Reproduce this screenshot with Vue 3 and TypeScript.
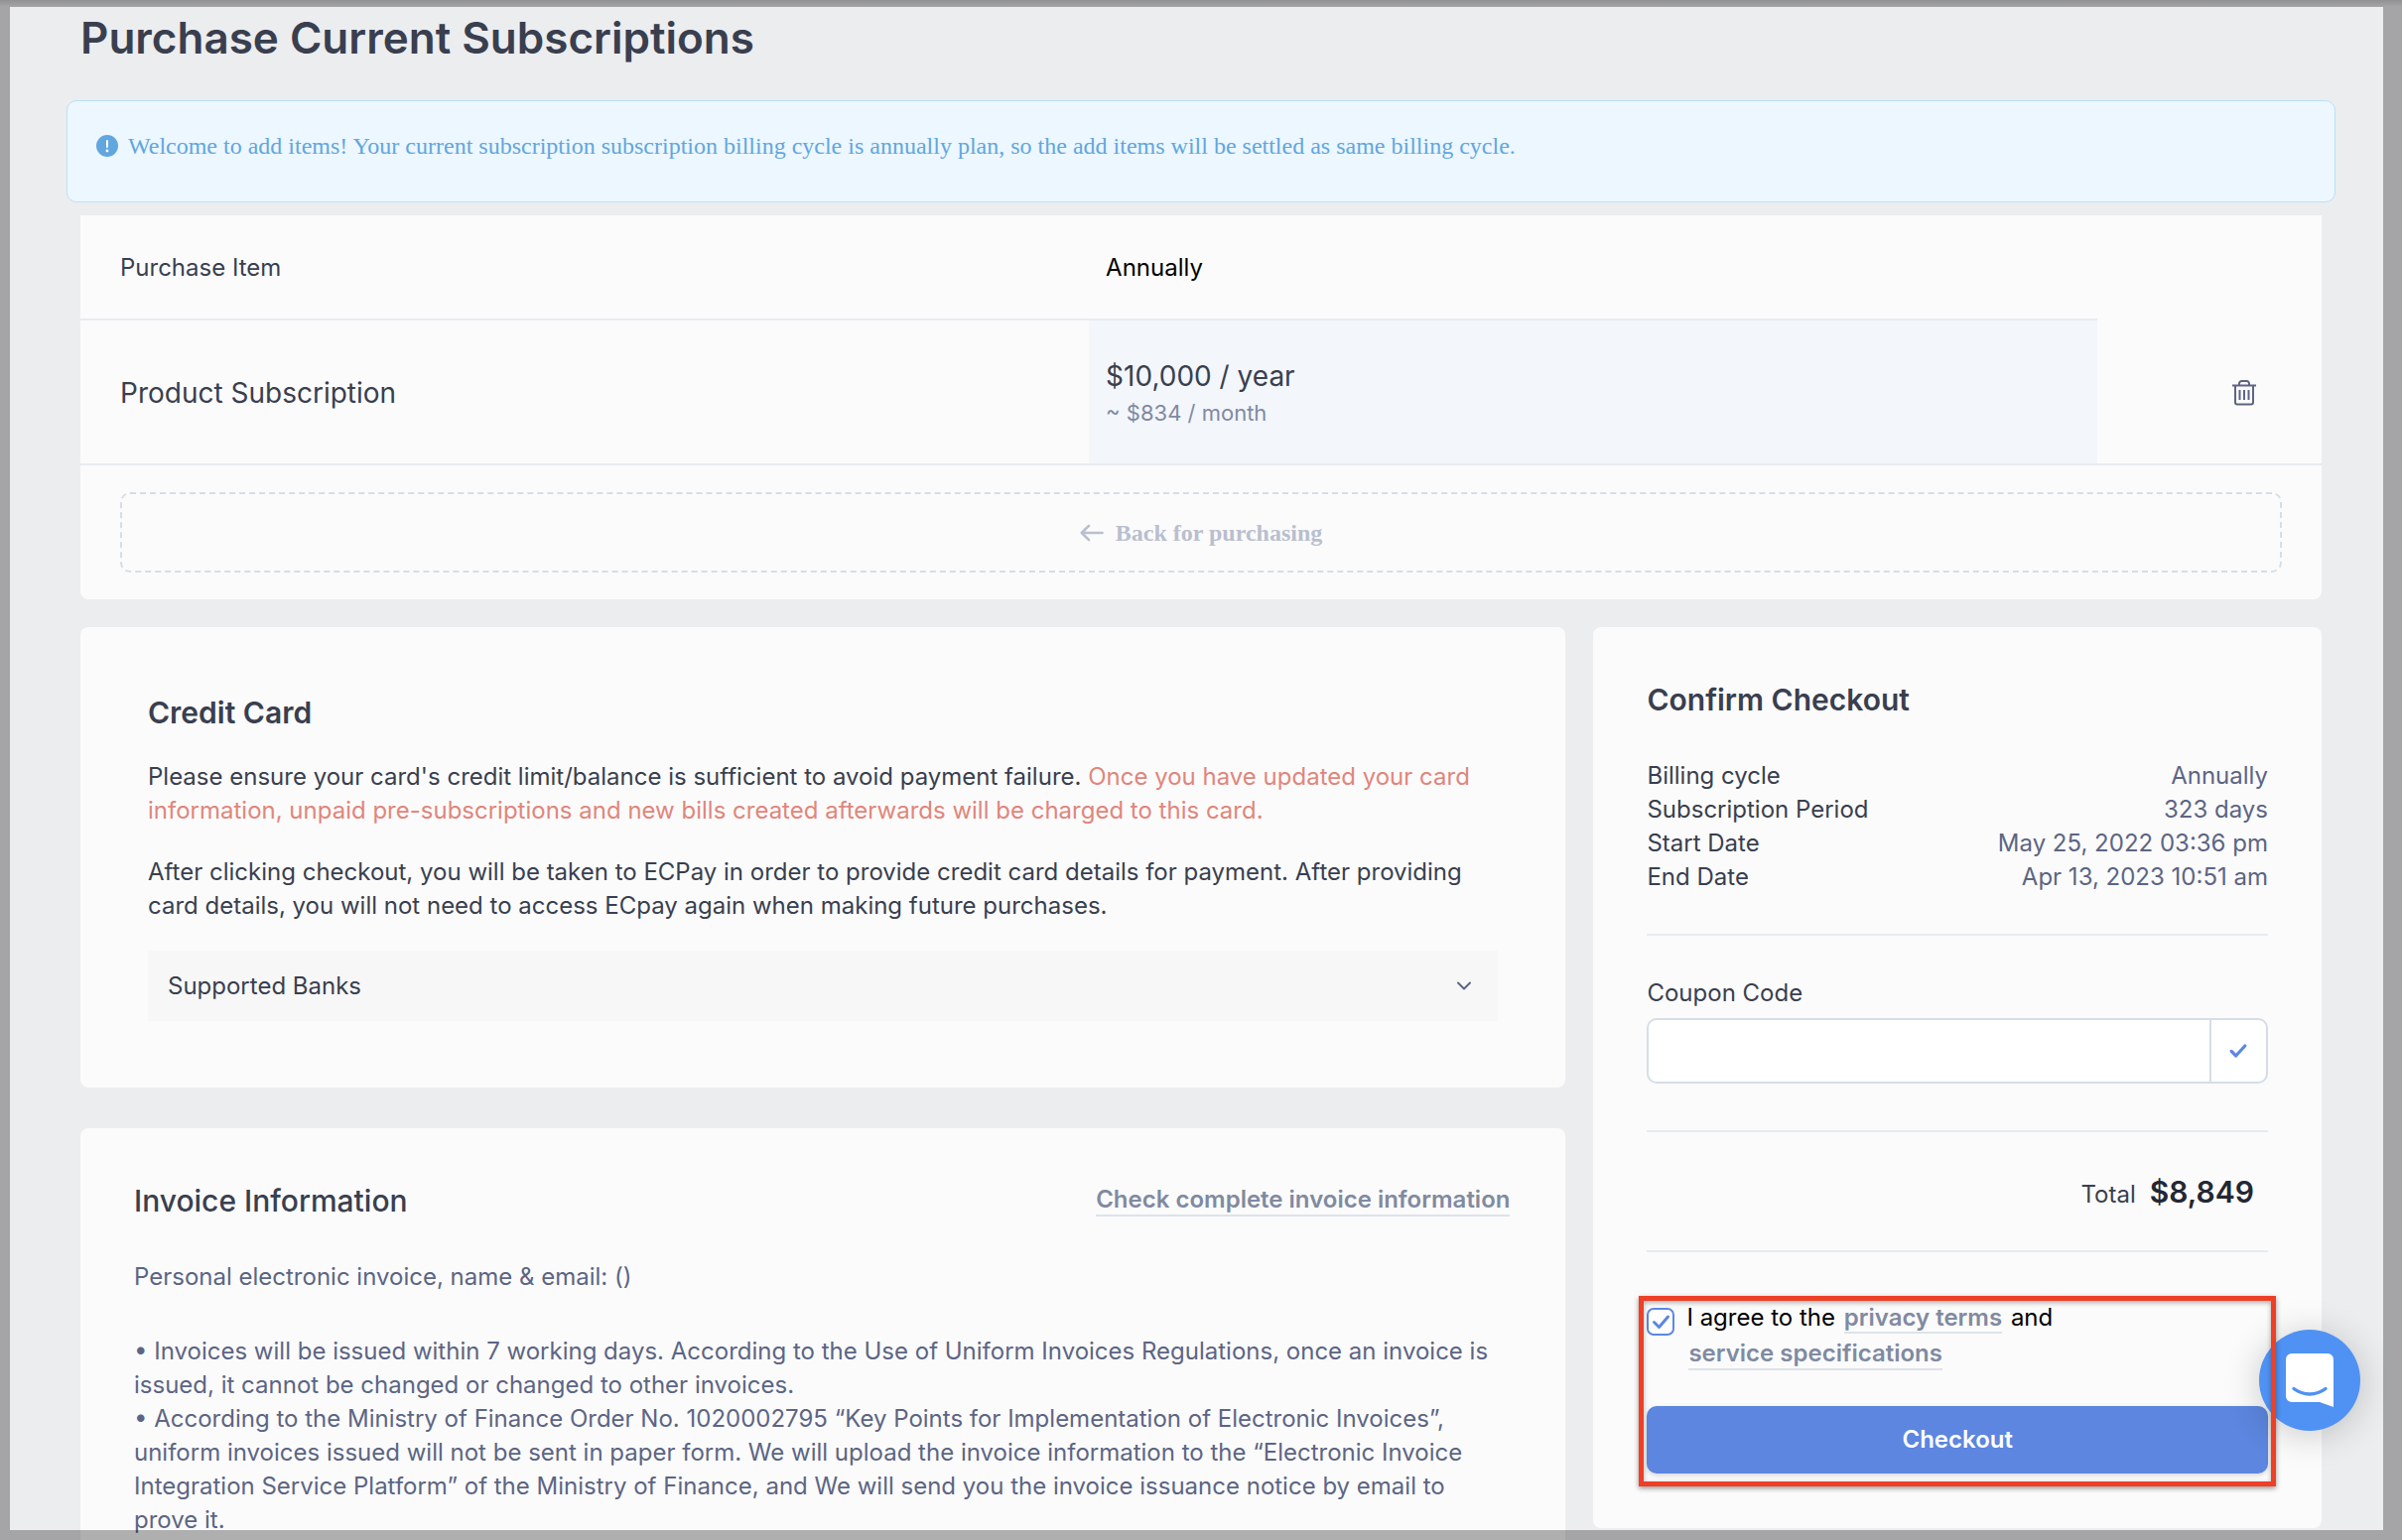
<script setup lang="ts">
import { ref } from 'vue'

interface SummaryRow {
  label: string
  value: string
}

const summary: SummaryRow[] = [
  { label: 'Billing cycle', value: 'Annually' },
  { label: 'Subscription Period', value: '323 days' },
  { label: 'Start Date', value: 'May 25, 2022 03:36 pm' },
  { label: 'End Date', value: 'Apr 13, 2023 10:51 am' },
]

const notes: string[] = [
  '• Invoices will be issued within 7 working days. According to the Use of Uniform Invoices Regulations, once an invoice is issued, it cannot be changed or changed to other invoices.',
  '• According to the Ministry of Finance Order No. 1020002795 “Key Points for Implementation of Electronic Invoices”, uniform invoices issued will not be sent in paper form. We will upload the invoice information to the “Electronic Invoice Integration Service Platform” of the Ministry of Finance, and We will send you the invoice issuance notice by email to prove it.',
]

const coupon = ref('')
const agreed = ref(true)
const banksOpen = ref(false)
</script>

<template>
  <div class="page">
    <main class="content">
      <h1 class="title">Purchase Current Subscriptions</h1>

      <div class="notice" role="status">
        <svg class="notice-icon" viewBox="0 0 22 22" aria-hidden="true">
          <circle cx="11" cy="11" r="11" fill="#62a6de" />
          <rect x="10" y="5" width="2" height="8" rx="1" fill="#fff" />
          <circle cx="11" cy="16" r="1.4" fill="#fff" />
        </svg>
        <span>Welcome to add items! Your current subscription subscription billing cycle is annually plan, so the add items will be settled as same billing cycle.</span>
      </div>

      <section class="card items">
        <table class="items-table">
          <thead>
            <tr>
              <th class="name" scope="col">Purchase Item</th>
              <th class="cycle" scope="col">Annually</th>
              <td class="actions"></td>
            </tr>
          </thead>
          <tbody>
            <tr>
              <td class="name product">Product Subscription</td>
              <td class="cycle price-cell">
                <div class="price">$10,000 / year</div>
                <div class="per-month">~ $834 / month</div>
              </td>
              <td class="actions">
                <button class="icon-button" type="button" aria-label="Remove item">
                  <svg width="24" height="26" viewBox="0 0 24 26" fill="none" stroke="#5c6584" stroke-width="2" aria-hidden="true">
                    <path d="M0 5.500h24M3 6v16.500a2 2 0 0 0 2 2h14a2 2 0 0 0 2-2V6M7 5V3.500a2.500 2.500 0 0 1 2.500-2.500h5A2.500 2.500 0 0 1 17 3.500V5M7.500 10v10M12 10v10M16.500 10v10" />
                  </svg>
                </button>
              </td>
            </tr>
          </tbody>
        </table>
        <div class="back-row">
          <button class="back" type="button">
            <svg width="24" height="18" viewBox="0 0 24 18" fill="none" stroke="#b9bfce" stroke-width="2.600" stroke-linecap="round" stroke-linejoin="round" aria-hidden="true">
              <path d="M22.500 9H2M9 1.800 1.800 9 9 16.200" />
            </svg>
            <span>Back for purchasing</span>
          </button>
        </div>
      </section>

      <div class="columns">
        <div class="column">
          <section class="card credit">
            <h2>Credit Card</h2>
            <p>
              Please ensure your card's credit limit/balance is sufficient to avoid payment failure.
              <span class="warn">Once you have updated your card information, unpaid pre-subscriptions and new bills created afterwards will be charged to this card.</span>
            </p>
            <p>After clicking checkout, you will be taken to ECPay in order to provide credit card details for payment. After providing card details, you will not need to access ECpay again when making future purchases.</p>
            <button class="banks" type="button" :aria-expanded="banksOpen" @click="banksOpen = !banksOpen">
              <span>Supported Banks</span>
              <svg width="16" height="10" viewBox="0 0 16 10" fill="none" stroke="#5c6584" stroke-width="2" stroke-linecap="round" stroke-linejoin="round" aria-hidden="true">
                <path d="M2 1.500l6 6 6-6" />
              </svg>
            </button>
          </section>

          <section class="card invoice">
            <div class="invoice-head">
              <h2>Invoice Information</h2>
              <a class="link" href="#">Check complete invoice information</a>
            </div>
            <p>Personal electronic invoice, name &amp; email: ()</p>
            <div class="notes">
              <p v-for="note in notes" :key="note">{{ note }}</p>
            </div>
          </section>
        </div>

        <aside class="card checkout">
          <h2>Confirm Checkout</h2>
          <dl class="summary">
            <div v-for="row in summary" :key="row.label">
              <dt>{{ row.label }}</dt>
              <dd>{{ row.value }}</dd>
            </div>
          </dl>

          <div class="coupon">
            <label for="coupon">Coupon Code</label>
            <div class="coupon-field">
              <input id="coupon" v-model="coupon" type="text" />
              <button type="button" aria-label="Apply coupon">
                <svg width="18" height="16" viewBox="0 0 18 16" fill="none" stroke="#5c87e3" stroke-width="3.200" stroke-linecap="round" stroke-linejoin="round" aria-hidden="true">
                  <path d="M2.200 8.500 6.700 13 15.800 3" />
                </svg>
              </button>
            </div>
          </div>

          <div class="total">
            <span>Total</span>
            <strong>$8,849</strong>
          </div>

          <div class="confirm">
            <div class="agree">
              <span class="tick">
                <input id="agree" v-model="agreed" type="checkbox" />
                <svg v-if="agreed" viewBox="0 0 28 28" fill="none" stroke="#5c87e3" stroke-width="3" stroke-linecap="round" stroke-linejoin="round" aria-hidden="true">
                  <path d="M7.500 14.500 12.500 19.500 21.500 9" />
                </svg>
              </span>
              <label for="agree">I agree to the <a class="link" href="#">privacy terms</a> and <a class="link second" href="#">service specifications</a></label>
            </div>
            <button class="submit" type="button">Checkout</button>
            <div class="highlight"></div>
          </div>
        </aside>
      </div>
    </main>

    <button class="chat" type="button" aria-label="Open chat">
      <svg width="48" height="54" viewBox="0 0 48 54" aria-hidden="true">
        <path d="M6 0h36a6 6 0 0 1 6 6v48l-14-5H6a6 6 0 0 1-6-6V6a6 6 0 0 1 6-6z" fill="#fff" />
        <path d="M8 35.500c9.500 7.300 22.500 7.300 32 0" fill="none" stroke="#4f92f3" stroke-width="3.400" stroke-linecap="round" />
      </svg>
    </button>
    <div class="shade"></div>
  </div>
</template>

<style>
body {
  margin: 0;
}
</style>

<style scoped>
* {
  box-sizing: border-box;
}

.page {
  position: relative;
  height: 100vh;
  overflow: hidden;
  background: #ecedef;
  color: #393f4f;
  font-family: Inter, 'Liberation Sans', sans-serif;
  font-size: 24px;
  line-height: 34px;
}

.shade {
  position: absolute;
  inset: 0;
  z-index: 4;
  border-style: solid;
  border-color: rgba(0, 0, 0, 0.3);
  border-width: 7px 19px 10px 10px;
  background: linear-gradient(rgba(0, 0, 0, 0.12), transparent) border-box top / 100% 7px no-repeat;
  pointer-events: none;
}

.content {
  padding: 8px 81px 0;
}

h1,
h2,
p,
dl,
dd {
  margin: 0;
}

button,
input {
  font: inherit;
  color: inherit;
}

button {
  padding: 0;
  border: 0;
  background: none;
  cursor: pointer;
}

svg {
  display: block;
  flex: none;
}

.title {
  font-size: 44px;
  line-height: 60px;
  font-weight: 600;
}

h2 {
  font-size: 30px;
  line-height: 40px;
  font-weight: 600;
}

.notice {
  display: flex;
  align-items: flex-start;
  gap: 10px;
  margin: 33px -14px 13px;
  padding: 28px 29px 39px;
  border: 1px solid #bcdff7;
  border-radius: 10px;
  background: #ecf7ff;
  color: #62a6de;
  font-family: 'Liberation Serif', serif;
}

.notice-icon {
  width: 22px;
  height: 22px;
  margin-top: 6px;
}

.card {
  border-radius: 8px;
  background: #fbfbfb;
}

.items {
  border-radius: 0 0 8px 8px;
}

.items-table {
  width: 100%;
  table-layout: fixed;
  border-spacing: 0;
}

.items-table th,
.items-table td {
  padding: 2px 0 0;
  text-align: left;
  font-weight: 400;
  vertical-align: middle;
}

.items-table thead tr {
  height: 106px;
}

.items-table tbody tr {
  height: 146px;
}

.items-table thead th,
.items-table tbody td {
  border-bottom: 2px solid #e7ebf1;
}

.items-table .name {
  width: 45%;
  padding-left: 40px;
}

.items-table .cycle {
  width: 45%;
  padding-left: 17px;
}

.items-table thead .cycle {
  color: #000;
}

.items-table .product,
.price {
  font-size: 28px;
  line-height: 40px;
}

.price-cell {
  background: #f3f6fb;
  background-clip: padding-box;
}

.per-month {
  color: #808aa1;
  font-size: 22px;
}

.icon-button {
  display: block;
  margin: 0 66px 0 auto;
}

.back-row {
  padding: 27px 40px;
}

.back {
  display: flex;
  align-items: center;
  justify-content: center;
  gap: 12px;
  width: 100%;
  height: 81px;
  border: 2px dashed #d5dee7;
  border-radius: 10px;
  color: #b9bfce;
  font-family: 'Liberation Serif', serif;
  font-weight: 700;
}

.columns {
  display: grid;
  grid-template-columns: minmax(0, 2.04fr) minmax(0, 1fr);
  align-items: start;
  gap: 28px;
  margin-top: 28px;
}

.column {
  display: grid;
  gap: 41px;
}

.credit {
  display: grid;
  gap: 28px;
  padding: 66px 68px 67px;
}

.warn {
  color: #e0867b;
}

.banks {
  display: flex;
  align-items: center;
  justify-content: space-between;
  width: 100%;
  height: 71px;
  padding: 0 26px 0 20px;
  background: #f7f7f7;
}

.invoice {
  padding: 53px 54px;
  color: #5c6584;
}

.invoice h2 {
  color: #393f4f;
  font-weight: 500;
}

.invoice-head {
  display: flex;
  align-items: center;
  justify-content: space-between;
  margin-bottom: 40px;
}

.notes {
  margin-top: 41px;
}

.link {
  margin: 0 2px;
  border-bottom: 2px solid #dde3ea;
  color: #808aa1;
  font-weight: 600;
  line-height: 30px;
  text-decoration: none;
}

.checkout {
  padding: 53px 54px 55px;
}

.summary {
  padding: 40px 0;
  border-bottom: 2px solid #e7ebf1;
}

.summary div {
  display: flex;
  justify-content: space-between;
}

.summary dd {
  color: #5c6584;
}

.coupon {
  padding: 41px 0 47px;
  border-bottom: 2px solid #e7ebf1;
}

.coupon label {
  display: block;
  margin-bottom: 8px;
}

.coupon-field {
  display: flex;
  height: 66px;
  overflow: hidden;
  border: 2px solid #d5dee7;
  border-radius: 10px;
  background: #fff;
}

.coupon-field input {
  flex: 1;
  min-width: 0;
  padding: 0 16px;
  border: 0;
  background: none;
}

.coupon-field button {
  display: flex;
  align-items: center;
  justify-content: center;
  width: 57px;
  border-left: 2px solid #d5dee7;
}

.total {
  display: flex;
  align-items: baseline;
  justify-content: flex-end;
  gap: 14px;
  padding: 40px 14px 39px 0;
  border-bottom: 2px solid #e7ebf1;
}

.total strong {
  color: #232733;
  font-size: 30px;
  line-height: 40px;
  font-weight: 600;
}

.confirm {
  position: relative;
  padding-top: 48px;
}

.agree {
  display: flex;
  align-items: flex-start;
  gap: 12px;
  max-width: 440px;
  margin-bottom: 35px;
  color: #000;
  line-height: 36px;
}

.tick {
  position: relative;
  flex: none;
  width: 28px;
  height: 28px;
  margin-top: 8px;
}

.tick input {
  display: block;
  width: 28px;
  height: 28px;
  margin: 0;
  appearance: none;
  border: 2px solid #5c87e3;
  border-radius: 7px;
  background: #fff;
}

.tick svg {
  position: absolute;
  inset: 0;
  pointer-events: none;
}

.link.second {
  display: inline-block;
}

.submit {
  display: block;
  width: 100%;
  height: 68px;
  border-radius: 10px;
  background: #5c86df;
  box-shadow: 0 2px 5px rgba(0, 0, 0, 0.15);
  color: #fff;
  font-weight: 600;
}

.highlight {
  position: absolute;
  inset: 44px -8px -13px;
  z-index: 3;
  border: 5px solid #ee4026;
  box-shadow: 0 2px 5px rgba(0, 0, 0, 0.4), inset 0 2px 5px rgba(0, 0, 0, 0.3);
  pointer-events: none;
}

.chat {
  position: absolute;
  right: 42px;
  bottom: 110px;
  z-index: 2;
  display: flex;
  align-items: center;
  justify-content: center;
  width: 102px;
  height: 102px;
  border-radius: 50%;
  background: #4f92f3;
  box-shadow: 0 4px 36px rgba(0, 0, 0, 0.2);
}
</style>
